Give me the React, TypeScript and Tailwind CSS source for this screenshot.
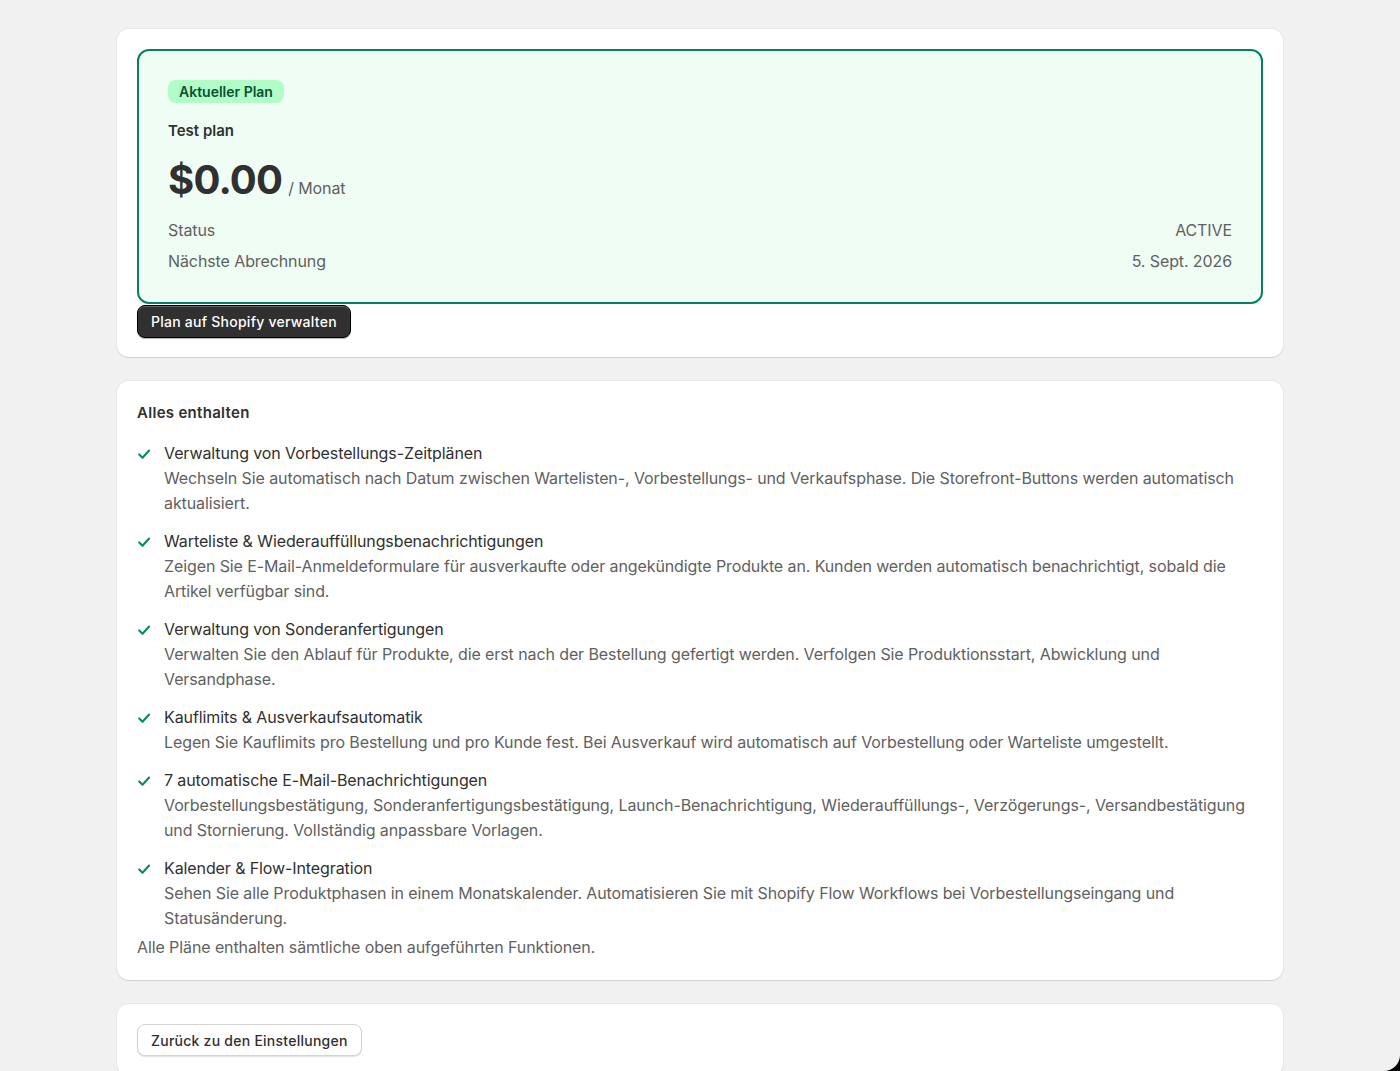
import React from 'react';

interface Feature {
  title: string;
  description: string;
}

const features: Feature[] = [
  {
    title: 'Verwaltung von Vorbestellungs-Zeitplänen',
    description:
      'Wechseln Sie automatisch nach Datum zwischen Wartelisten-, Vorbestellungs- und Verkaufsphase. Die Storefront-Buttons werden automatisch aktualisiert.',
  },
  {
    title: 'Warteliste & Wiederauffüllungsbenachrichtigungen',
    description:
      'Zeigen Sie E-Mail-Anmeldeformulare für ausverkaufte oder angekündigte Produkte an. Kunden werden automatisch benachrichtigt, sobald die Artikel verfügbar sind.',
  },
  {
    title: 'Verwaltung von Sonderanfertigungen',
    description:
      'Verwalten Sie den Ablauf für Produkte, die erst nach der Bestellung gefertigt werden. Verfolgen Sie Produktionsstart, Abwicklung und Versandphase.',
  },
  {
    title: 'Kauflimits & Ausverkaufsautomatik',
    description:
      'Legen Sie Kauflimits pro Bestellung und pro Kunde fest. Bei Ausverkauf wird automatisch auf Vorbestellung oder Warteliste umgestellt.',
  },
  {
    title: '7 automatische E-Mail-Benachrichtigungen',
    description:
      'Vorbestellungsbestätigung, Sonderanfertigungsbestätigung, Launch-Benachrichtigung, Wiederauffüllungs-, Verzögerungs-, Versandbestätigung und Stornierung. Vollständig anpassbare Vorlagen.',
  },
  {
    title: 'Kalender & Flow-Integration',
    description:
      'Sehen Sie alle Produktphasen in einem Monatskalender. Automatisieren Sie mit Shopify Flow Workflows bei Vorbestellungseingang und Statusänderung.',
  },
];

const CheckIcon = () => (
  <svg width="14" height="14" viewBox="0 0 16 16" fill="none" className="shrink-0 mt-[6px]">
    <path d="M2.5 8.5l3.8 3.8L13.8 4" stroke="#0b8a62" strokeWidth="2.4" strokeLinecap="round" strokeLinejoin="round" />
  </svg>
);

const Card: React.FC<{ children: React.ReactNode; className?: string }> = ({ children, className = 'p-5' }) => (
  <div className={`bg-white rounded-[12px] shadow-[0_1px_1px_rgba(0,0,0,0.1),0_0_0_1px_rgba(0,0,0,0.035)] ${className}`}>
    {children}
  </div>
);

const App: React.FC = () => {
  return (
    <div
      className="min-h-screen bg-[#f1f1f1] text-[#303030] pt-[29px] pb-6 tracking-[-0.1px]"
      style={{ fontFamily: 'Inter, "Noto Sans", sans-serif' }}
    >
      <div className="max-w-[1166px] mx-auto flex flex-col gap-6">
        {/* Current plan */}
        <Card className="px-5 pt-5 pb-[19px]">
          <div className="border-2 border-[#058061] bg-[#effdf4] rounded-[12px] px-[29px] pt-[28px] pb-[29px]">
            <span className="inline-flex items-center h-[23px] px-[11px] rounded-[8px] bg-[#b0fdc8] text-[#0c5132] text-[14px] font-semibold tracking-normal">
              Aktueller Plan
            </span>
            <div className="mt-4 text-[15px] leading-6 font-semibold tracking-normal">Test plan</div>
            <div className="mt-[13px] flex items-baseline gap-[6px]">
              <span className="text-[40px] leading-[48px] font-bold tracking-[-0.8px]">$0.00</span>
              <span className="text-[16px] text-[#616161]">/ Monat</span>
            </div>
            <div className="mt-[14px] flex flex-col gap-[7px] text-[16px] leading-6 text-[#616161]">
              <div className="flex justify-between">
                <span>Status</span>
                <span>ACTIVE</span>
              </div>
              <div className="flex justify-between">
                <span>Nächste Abrechnung</span>
                <span>5. Sept. 2026</span>
              </div>
            </div>
          </div>
          <button className="mt-[1px] h-[33px] px-[13px] rounded-[8px] bg-[#303030] text-white text-[14px] font-medium tracking-[0.25px] border border-black shadow-[inset_0_1px_0_rgba(255,255,255,0.25),0_1px_1px_rgba(0,0,0,0.3)]">
            Plan auf Shopify verwalten
          </button>
        </Card>

        {/* Features */}
        <Card>
          <div className="text-[15px] leading-6 font-semibold tracking-[0.3px]">Alles enthalten</div>
          <ul className="mt-4 flex flex-col gap-[13px]">
            {features.map((f) => (
              <li key={f.title} className="flex gap-[13px]">
                <CheckIcon />
                <div className="text-[16px] leading-[25px]">
                  <div className="text-[#303030]">{f.title}</div>
                  <div className="text-[#616161]">{f.description}</div>
                </div>
              </li>
            ))}
          </ul>
          <p className="mt-1 text-[16px] leading-[25px] text-[#616161]">
            Alle Pläne enthalten sämtliche oben aufgeführten Funktionen.
          </p>
        </Card>

        {/* Back */}
        <Card>
          <button className="h-[32px] px-[13px] rounded-[8px] bg-white text-[#303030] text-[14px] font-medium tracking-[0.25px] border border-[#d4d4d4] shadow-[0_1px_1px_rgba(0,0,0,0.12)]">
            Zurück zu den Einstellungen
          </button>
        </Card>
      </div>

      {/* window corner */}
      <div className="fixed bottom-0 right-0 w-[18px] h-[18px] bg-black">
        <div className="w-full h-full bg-[#f1f1f1] rounded-br-[16px]" />
      </div>
    </div>
  );
};

export default App;
